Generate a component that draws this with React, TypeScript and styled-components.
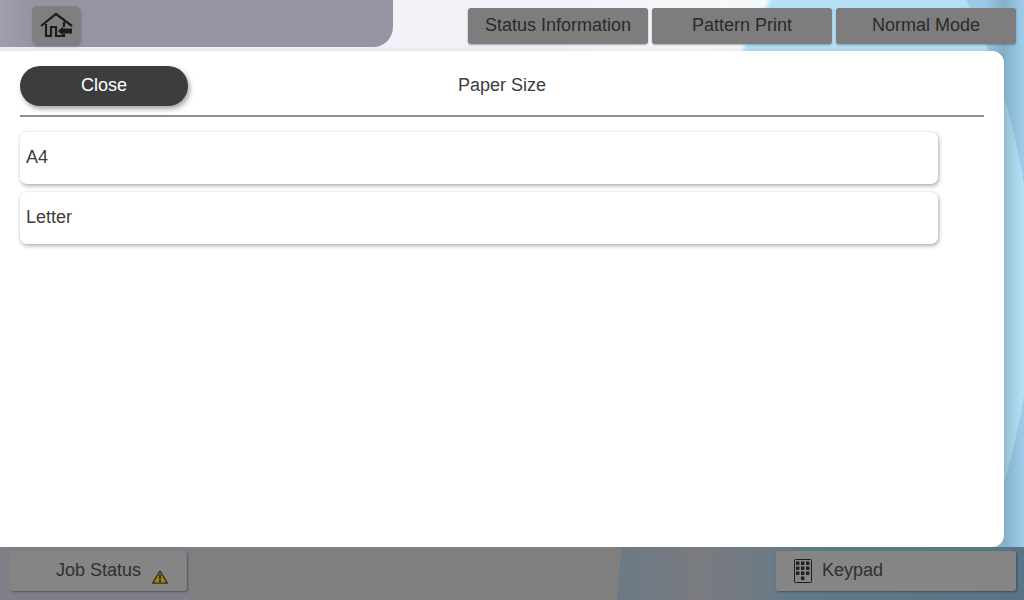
import React from "react";
import styled, { createGlobalStyle } from "styled-components";

const Global = createGlobalStyle`
  html, body { margin: 0; padding: 0; width: 1024px; height: 600px; overflow: hidden; }
  body { font-family: "Liberation Sans", Arial, sans-serif; }
  * { box-sizing: border-box; }
`;

const Screen = styled.div`
  width: 1024px;
  height: 600px;
  display: flex;
  flex-direction: column;
  overflow: hidden;
  background:
    linear-gradient(90deg, rgba(60, 85, 100, 0) 985px, rgba(60, 85, 100, 0.24) 1004px, rgba(60, 85, 100, 0) 1022px),
    radial-gradient(circle 669px at 364px 290px, #b3e0f5 0 99.8%, #9ccbe8 100%);
`;

const Header = styled.header`
  height: 51px;
  flex: none;
  display: flex;
  justify-content: space-between;
  align-items: flex-start;
  background: linear-gradient(118.8deg, #f1f2f8 0, #f1f2f8 470px, #f7f9fc 640px, #f4f8fb 672px, rgba(244, 248, 251, 0) 678px);
`;

const HomeTab = styled.div`
  width: 393px;
  height: 47px;
  background: linear-gradient(90deg, #a09fad 0, #9594a3 30px);
  border-bottom-right-radius: 20px;
  padding: 6px 0 0 32px;
`;

const HomeButton = styled.button`
  width: 48px;
  height: 38px;
  border: 0;
  padding: 0;
  border-radius: 5px;
  background: #807f80;
  box-shadow: 1px 2px 3px rgba(60, 60, 70, 0.35);
  display: flex;
  align-items: center;
  justify-content: center;
  svg { display: block; }
`;

const ModeButtons = styled.div`
  display: flex;
  gap: 4px;
  padding: 8px 8px 0 0;
`;

const ModeButton = styled.button<{ $w: number }>`
  width: ${(p) => p.$w}px;
  height: 36px;
  border: 0;
  padding: 0 0 2px;
  border-radius: 3px;
  background: #7d7d7d;
  color: #2a2a2a;
  font: 18px "Liberation Sans", Arial, sans-serif;
  box-shadow: 0 1px 2px rgba(40, 60, 80, 0.4);
`;

const Panel = styled.main`
  flex: 1;
  width: 1004px;
  background: #fff;
  border-radius: 0 12px 12px 0;
  padding: 15px 20px 0;
  box-shadow: 0 -2px 4px rgba(0, 0, 0, 0.06);
`;

const TitleRow = styled.div`
  position: relative;
  height: 51px;
  border-bottom: 2px solid #8e8e8e;
`;

const CloseButton = styled.button`
  width: 168px;
  height: 40px;
  border: 0;
  padding: 0 0 2px;
  border-radius: 20px;
  background: #3d3d3d;
  color: #fff;
  font: 18px "Liberation Sans", Arial, sans-serif;
  box-shadow: 2px 3px 5px rgba(0, 0, 0, 0.35);
`;

const Title = styled.h1`
  position: absolute;
  left: 0;
  right: 0;
  top: 8px;
  margin: 0;
  text-align: center;
  font: 18px/22px "Liberation Sans", Arial, sans-serif;
  color: #3c3c3c;
`;

const List = styled.ul`
  list-style: none;
  margin: 15px 0 0;
  padding: 0;
  width: 918px;
  display: flex;
  flex-direction: column;
  gap: 8px;
`;

const Item = styled.li`
  height: 52px;
  border-radius: 7px;
  background: #fff;
  padding: 0 6px 2px;
  display: flex;
  align-items: center;
  font-size: 18px;
  color: #3c3c3c;
  box-shadow: 1px 2px 4px rgba(0, 0, 0, 0.3), 0 0 3px rgba(0, 0, 0, 0.08);
`;

const Footer = styled.footer`
  height: 53px;
  flex: none;
  display: flex;
  justify-content: space-between;
  padding: 4px 8px 0 10px;
  background:
    linear-gradient(90deg, #7f7f87 0 192px, transparent 192px),
    linear-gradient(95.4deg, #7f807e 0 619px, transparent 619px),
    linear-gradient(90deg, #6b7a85 620px, #7a7b80 700px, #6f7a84 760px, #5f7a8a 800px, #587486 1024px);
`;

const FooterButton = styled.button<{ $w: number }>`
  height: 40px;
  width: ${(p) => p.$w}px;
  border: 0;
  padding: 0 0 2px;
  border-radius: 3px;
  background: #858585;
  color: #303030;
  font: 18px "Liberation Sans", Arial, sans-serif;
  box-shadow: 1px 1px 2px rgba(30, 30, 30, 0.45);
  display: flex;
  align-items: center;
`;

const JobLabel = styled.span`
  margin: 0 11px 0 46px;
`;

const WarningMark = styled.svg`
  display: block;
  margin-top: 14px;
`;

const KeypadMark = styled.svg`
  display: block;
  margin: 2px 10px 0 18px;
`;

const HomeIcon = () => (
  <svg width="34" height="28" viewBox="0 0 34 28" fill="none" stroke="#1c1c1c" strokeWidth="2.2">
    <path d="M2 15 L17 3 L33 15" />
    <path d="M7 13 V25 H12 V16 H17 V25 H25 V23" />
    <path d="M25 11 V16" />
    <path d="M19 20 L24 15.5 V17.5 H33 V22.5 H24 V24.5 Z" fill="#1c1c1c" stroke="none" />
  </svg>
);

const WarningIcon = () => (
  <WarningMark width="16" height="14" viewBox="0 0 16 14">
    <path d="M8 1 L15.3 13.2 H0.7 Z" fill="#a48700" stroke="#2a2a2a" strokeWidth="1.3" strokeLinejoin="round" />
    <path d="M8 4.6 V9.2 M8 10 V12" stroke="#1f1f1f" strokeWidth="1.7" />
  </WarningMark>
);

const KeypadIcon = () => (
  <KeypadMark width="18" height="24" viewBox="0 0 18 24">
    <rect x="0.5" y="0.5" width="17" height="23" rx="1" fill="none" stroke="#1e1e1e" />
    {[2.5, 7.5, 12.5].map((y) =>
      [2, 7, 12].map((x) => <rect key={`${x}-${y}`} x={x} y={y} width="3.4" height="3.4" fill="#1e1e1e" />)
    )}
    <rect x="7" y="17.5" width="3.4" height="3.4" fill="#1e1e1e" />
  </KeypadMark>
);

export default function App() {
  return (
    <Screen>
      <Global />
      <Header>
        <HomeTab>
          <HomeButton aria-label="Home"><HomeIcon /></HomeButton>
        </HomeTab>
        <ModeButtons>
          <ModeButton $w={180}>Status Information</ModeButton>
          <ModeButton $w={180}>Pattern Print</ModeButton>
          <ModeButton $w={180}>Normal Mode</ModeButton>
        </ModeButtons>
      </Header>
      <Panel>
        <TitleRow>
          <CloseButton>Close</CloseButton>
          <Title>Paper Size</Title>
        </TitleRow>
        <List>
          <Item>A4</Item>
          <Item>Letter</Item>
        </List>
      </Panel>
      <Footer>
        <FooterButton $w={177}>
          <JobLabel>Job Status</JobLabel>
          <WarningIcon />
        </FooterButton>
        <FooterButton $w={240}>
          <KeypadIcon />
          <span>Keypad</span>
        </FooterButton>
      </Footer>
    </Screen>
  );
}
